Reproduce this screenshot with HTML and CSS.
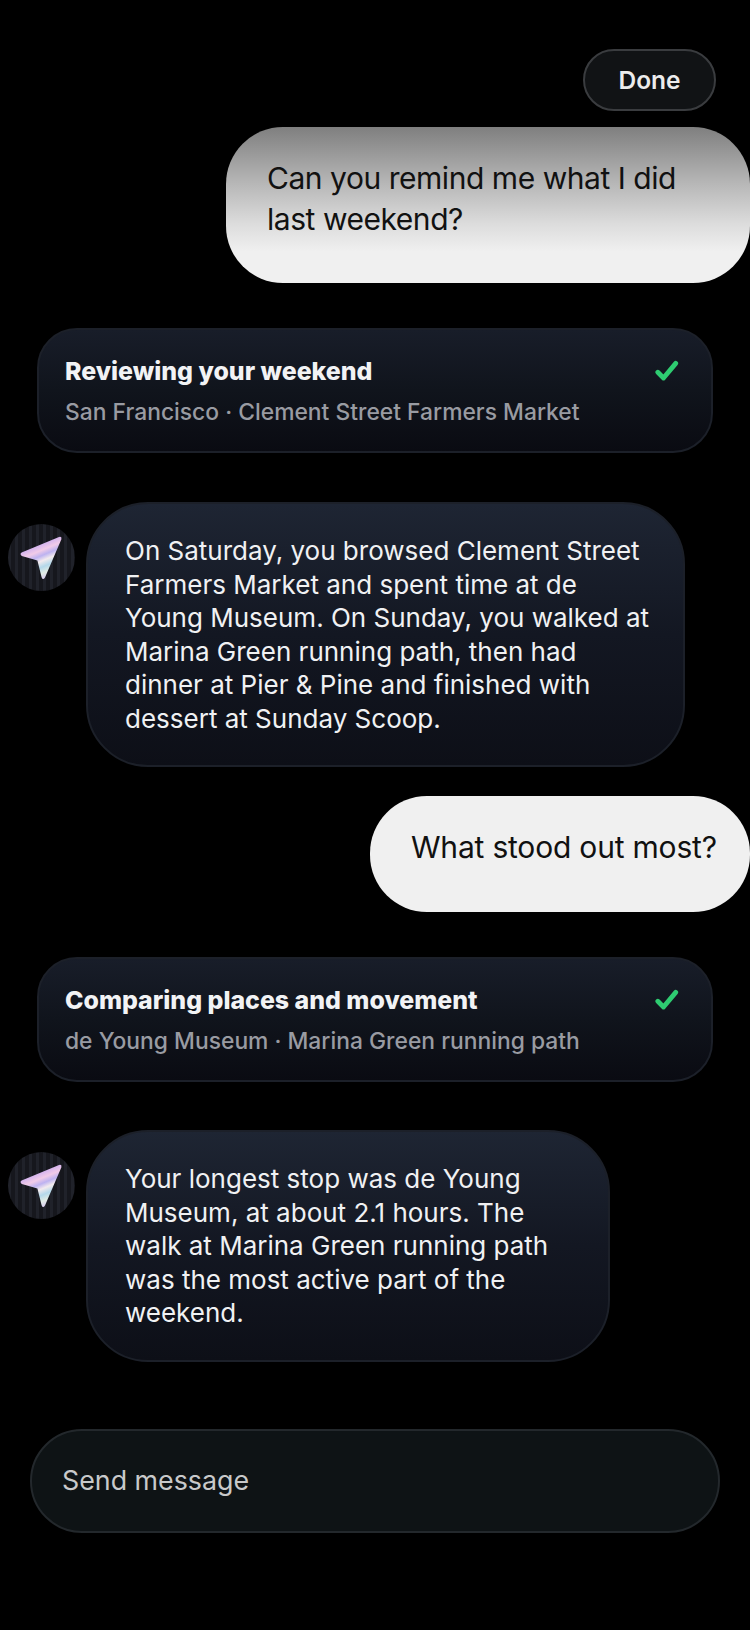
FILE: index.html
```html
<!DOCTYPE html>
<html lang="en">
<head>
    <meta charset="UTF-8">
    <meta name="viewport" content="width=device-width, initial-scale=1.0">
    <title>Chat</title>
    <link rel="stylesheet" href="styles.css">
</head>
<body>

    <svg class="defs" width="0" height="0">
        <defs>
            <linearGradient id="holo" gradientUnits="userSpaceOnUse" x1="24" y1="16" x2="40" y2="54">
                <stop offset="0" stop-color="#c4aeee"/>
                <stop offset="0.18" stop-color="#d4b4ee"/>
                <stop offset="0.32" stop-color="#f1cbe8"/>
                <stop offset="0.44" stop-color="#bdb2f0"/>
                <stop offset="0.56" stop-color="#f3ebee"/>
                <stop offset="0.7" stop-color="#b4d8ea"/>
                <stop offset="0.84" stop-color="#e0ebe4"/>
                <stop offset="1" stop-color="#d8c8f0"/>
            </linearGradient>
        </defs>
    </svg>

    <div class="chat">
        <button class="done-btn">Done</button>

        <div class="user-bubble fade">Can you remind me what I did last weekend?</div>

        <div class="step-card">
            <div class="step-head">
                <span class="step-title">Reviewing your weekend</span>
                <svg class="check" viewBox="0 0 22 20"><path d="M2.6 11.2 L7.8 16.4 L19 3" fill="none" stroke="#2ecc71" stroke-width="4.4" stroke-linecap="round" stroke-linejoin="round"/></svg>
            </div>
            <div class="step-sub">San Francisco · Clement Street Farmers Market</div>
        </div>

        <div class="reply">
            <div class="avatar">
                <svg viewBox="0 0 67 67"><path d="M13.6 28.6 L51 13 Q54 12.2 53.4 15.2 L37 53.6 Q34.8 56.8 33.6 53.2 L29.4 36.4 L13.8 32 Q11.4 30 13.6 28.6 Z" fill="url(#holo)"/></svg>
            </div>
            <div class="reply-bubble wide">On Saturday, you browsed Clement Street Farmers Market and spent time at de Young Museum. On Sunday, you walked at Marina Green running path, then had dinner at Pier &amp; Pine and finished with dessert at Sunday Scoop.</div>
        </div>

        <div class="user-bubble second">What stood out most?</div>

        <div class="step-card">
            <div class="step-head">
                <span class="step-title">Comparing places and movement</span>
                <svg class="check" viewBox="0 0 22 20"><path d="M2.6 11.2 L7.8 16.4 L19 3" fill="none" stroke="#2ecc71" stroke-width="4.4" stroke-linecap="round" stroke-linejoin="round"/></svg>
            </div>
            <div class="step-sub">de Young Museum · Marina Green running path</div>
        </div>

        <div class="reply last-reply">
            <div class="avatar">
                <svg viewBox="0 0 67 67"><path d="M13.6 28.6 L51 13 Q54 12.2 53.4 15.2 L37 53.6 Q34.8 56.8 33.6 53.2 L29.4 36.4 L13.8 32 Q11.4 30 13.6 28.6 Z" fill="url(#holo)"/></svg>
            </div>
            <div class="reply-bubble narrow">Your longest stop was de Young Museum, at about 2.1 hours. The walk at Marina Green running path was the most active part of the weekend.</div>
        </div>

        <div class="send-box">Send message</div>
    </div>

</body>
</html>
```

FILE: styles.css
```css
body {
    margin: 0;
    background: #000;
    font-family: "Inter", "Liberation Sans", sans-serif;
    overflow: hidden;
}

.defs {
    position: absolute;
}

.chat {
    display: flex;
    flex-direction: column;
    height: 1630px;
    padding-top: 49px;
    box-sizing: border-box;
}

.done-btn {
    align-self: flex-end;
    width: 133px;
    height: 62px;
    margin-right: 34px;
    background: #111315;
    border: 2px solid #3a3c3f;
    border-radius: 31px;
    color: #ececec;
    font-family: inherit;
    font-size: 24.5px;
    font-weight: 600;
}

.user-bubble {
    align-self: flex-end;
    box-sizing: border-box;
    background: #f0f0f0;
    color: #111;
    font-size: 30px;
    line-height: 40.5px;
    border-radius: 57px;
    padding: 31px 34px 36px 41px;
}

.user-bubble.fade {
    width: 524px;
    height: 156px;
    margin-top: 16px;
    letter-spacing: -0.46px;
    background: linear-gradient(180deg, #7f7f7f 0%, #b5b5b5 35%, #dcdcdc 62%, #f0f0f0 80%);
}

.user-bubble.second {
    width: 380px;
    height: 116px;
    margin-top: 29px;
    letter-spacing: -0.2px;
    white-space: nowrap;
}

.step-card {
    box-sizing: border-box;
    width: 676px;
    height: 125px;
    margin: 45px 0 0 37px;
    padding: 25px 32px 0 26px;
    border: 2px solid #1c2029;
    border-radius: 40px;
    background: linear-gradient(180deg, #181d29 0%, #10141c 50%, #0a0b12 100%);
}

.step-head {
    display: flex;
    justify-content: space-between;
    align-items: center;
}

.step-title {
    color: #f2f3f5;
    font-size: 24.9px;
    font-weight: 800;
    line-height: 32px;
}

.check {
    width: 24px;
    height: 22px;
}

.step-sub {
    margin-top: 10px;
    color: #999ba2;
    font-size: 22.85px;
    font-weight: 500;
    line-height: 30px;
    white-space: nowrap;
}

.reply {
    display: flex;
    align-items: flex-start;
    margin-top: 49px;
}

.last-reply {
    margin-top: 48px;
}

.avatar {
    display: flex;
    width: 67px;
    height: 67px;
    margin: 22px 11px 0 8px;
    border-radius: 50%;
    background: repeating-linear-gradient(90deg, #20222a 0 3px, #16171d 3px 7px);
}

.avatar svg {
    width: 67px;
    height: 67px;
}

.reply-bubble {
    box-sizing: border-box;
    padding: 30px 28px 31px 37px;
    border: 2px solid #1c2029;
    border-radius: 62px;
    background: linear-gradient(180deg, #1e2533 0%, #131722 50%, #0d0f17 100%);
    color: #f0f1f3;
    font-size: 26px;
    line-height: 33.6px;
}

.reply-bubble.wide {
    width: 599px;
    height: 265px;
}

.reply-bubble.narrow {
    width: 524px;
    height: 232px;
}

.send-box {
    box-sizing: border-box;
    width: 690px;
    height: 104px;
    margin: 67px 0 0 30px;
    padding: 32px 30px 0;
    border: 2px solid #23282c;
    border-radius: 52px;
    background: #0e1315;
    color: #c8c9ca;
    font-size: 26.8px;
    line-height: 34px;
}
```
